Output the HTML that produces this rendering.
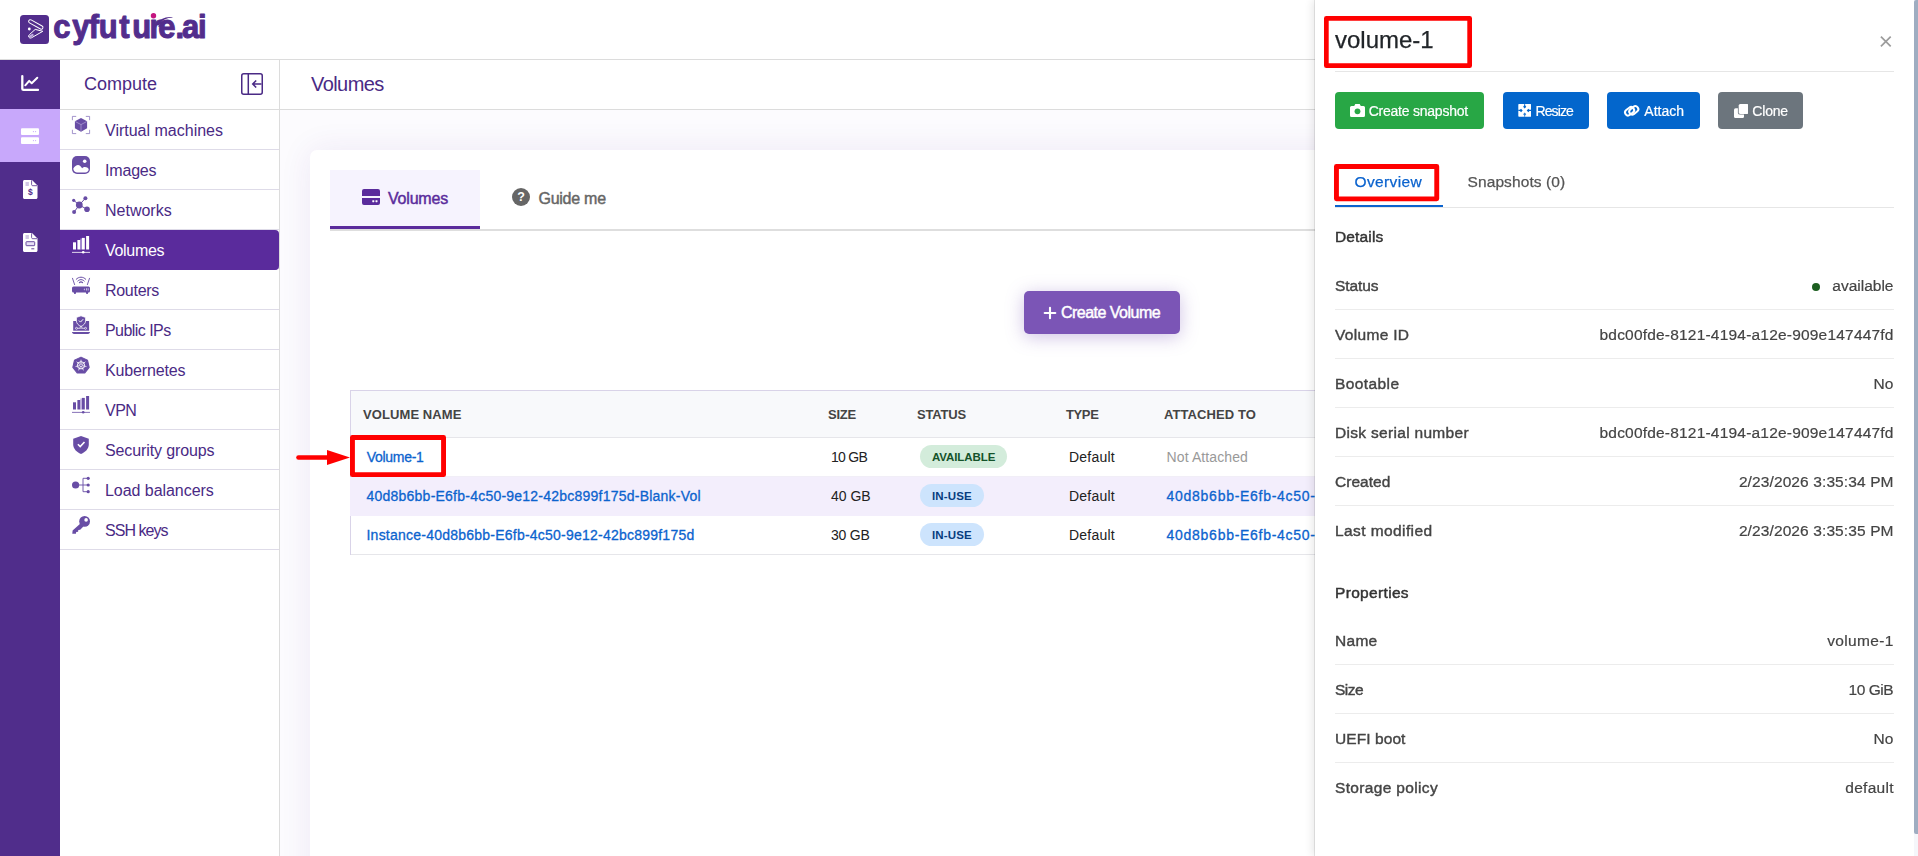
<!DOCTYPE html>
<html lang="en">
<head>
<meta charset="utf-8">
<title>Volumes</title>
<style>
*{box-sizing:border-box;margin:0;padding:0}
html,body{width:1918px;height:856px;overflow:hidden;background:#fff}
body{position:relative;font-family:"Liberation Sans",sans-serif;color:#4a2a85}
.abs{position:absolute}
/* top bar */
#top{position:absolute;left:0;top:0;width:1918px;height:60px;background:#fff;border-bottom:1px solid #dcdcdc}
#logo{position:absolute;left:50px;top:0;overflow:visible}
/* rail */
#rail{position:absolute;left:0;top:60px;width:60px;height:796px;background:#502d8b}
#rail .act{position:absolute;left:0;top:49px;width:60px;height:53px;background:#c8a8fb}
#rail .ri{position:absolute;overflow:visible}
/* sidebar */
#side{position:absolute;left:60px;top:60px;width:220px;height:796px;background:#fff;border-right:1px solid #dcdcdc}
#side .hd{height:50px;border-bottom:1px solid #dcdcdc;position:relative}
#side .hd span{position:absolute;left:24px;top:13px;font-size:18px;line-height:22px;color:#4a2a85}
#side .it{height:40px;border-bottom:1px solid #dedbe8;position:relative}
#side .it span{position:absolute;left:45px;top:11px;font-size:16px;line-height:20px;color:#4a2a85;white-space:nowrap}
#side .it svg{position:absolute;left:12px;top:6px;overflow:visible}
#side .it.on{background:#5a2b9c;border-radius:0 4px 4px 0;border-bottom-color:#5a2b9c}
#side .it.on span{color:#fff}
/* main */
#main{position:absolute;left:280px;top:60px;width:1638px;height:796px;background:#fcfbfe;overflow:hidden}
#main .hd{height:50px;background:#fff;border-bottom:1px solid #dcdcdc;position:relative}
#main .hd span{position:absolute;left:31px;top:12px;font-size:20px;line-height:24px;color:#4a2a85;letter-spacing:-.57px}
#card{position:absolute;left:30px;top:90px;width:1700px;height:800px;background:#fff;border-radius:7px;box-shadow:0 0 32px rgba(80,40,150,.085)}

/* tabs */
#tabs{position:absolute;left:20px;top:20px;width:1700px;height:61px;border-bottom:2px solid #dedede}
#tabs .t{position:absolute;top:0;height:59px;font-size:16px;line-height:20px;-webkit-text-stroke:.45px currentColor}
#tabs .t1{left:0;width:150px;background:#f6f3fe;border-bottom:3px solid #5a2b9c;color:#5a2b9c}
#tabs .t1 span{position:absolute;left:58px;top:19px;letter-spacing:-.2px}
#tabs .t1 svg{position:absolute;left:32px;top:19px}
#tabs .t2{left:150px;width:160px;color:#666}
#tabs .t2 span{position:absolute;left:58.500px;top:19px;letter-spacing:-.26px}
#tabs .t2 svg{position:absolute;left:32px;top:18px}
#cbtn{position:absolute;left:714px;top:141px;width:156px;height:43px;background:#7b55b6;border-radius:5px;box-shadow:0 3px 18px rgba(123,85,182,.36);color:#fff;font-size:16px;line-height:20px;-webkit-text-stroke:.45px #fff}
#cbtn span{position:absolute;left:37px;top:12px;white-space:nowrap;letter-spacing:-.52px}
#cbtn svg{position:absolute;left:19px;top:15px}
/* table */
#tbl{position:absolute;left:40px;top:240px;width:1660px;border:1px solid #d9d3e8;border-right:none;border-bottom:none}
#tbl .r{position:relative;height:38.750px;border-bottom:1px solid #e6e6ea;font-size:14px;line-height:18px;color:#222}
#tbl .r.h{height:47px;background:#f8f9fb;font-size:13px;font-weight:bold;color:#444;letter-spacing:.5px}
#tbl .r.hv{background:#f3eefc;border-bottom-color:#f3eefc;margin-left:-1px;padding-left:1px}
#tbl .r.hv span,#tbl .r.hv .bd{margin-left:1px}
#tbl .r.r1{border-bottom-color:#f1eef7}
#tbl .r.r3{height:39.500px}
#tbl .r span{position:absolute;top:10px;white-space:nowrap}
#tbl .r.h span{top:15px}
#tbl .c1{left:15.500px;color:#0b63ce;letter-spacing:.23px;-webkit-text-stroke:.3px #0b63ce}
#tbl .c2{left:480px}
#tbl .c3{left:569px}
#tbl .c4{left:718px;letter-spacing:.23px}
#tbl .c5{left:815.600px;letter-spacing:.23px}
#tbl .h .c1{left:12px;color:#444;-webkit-text-stroke:0}
#tbl .h .c2{left:477px}
#tbl .h .c3{left:566px}
#tbl .h .c4{left:715px}
#tbl .h .c5{left:813px}
#tbl a{color:#0b63ce;letter-spacing:.72px;-webkit-text-stroke:.3px #0b63ce}
#tbl .na{color:#999;letter-spacing:.1px}
#tbl .bd{position:absolute;left:569px;top:7px;height:23px;border-radius:12px;font-size:11.500px;font-weight:bold;line-height:24px;padding:0 12px;letter-spacing:.3px;white-space:nowrap}
#tbl .bd.g{background:#d3ecdb;color:#14532a;letter-spacing:-.1px;width:87px}
#tbl .bd.b{background:#cde4fd;color:#083d80;letter-spacing:.15px;width:64px}
#arrow{position:absolute;left:294px;top:448px}
.rb{position:absolute}
/* panel */
#panel{position:absolute;left:1315px;top:0;width:603px;height:856px;background:#fff;box-shadow:-1px 0 0 rgba(0,0,0,.09),-3px 0 8px rgba(0,0,0,.09);will-change:transform}

#panel{font-family:"Liberation Sans",sans-serif;color:#444}
#panel .ttl{position:absolute;left:20px;top:25px;font-size:24px;line-height:30px;color:#212529;white-space:nowrap;-webkit-text-stroke:.25px #212529}
#panel .hr{position:absolute;left:20px;top:71px;width:559px;height:1px;background:#e6e6e6}
#panel .btn{position:absolute;top:92px;height:37px;border-radius:4px;color:#fff;font-size:14px;line-height:18px}
#panel .btn span{position:absolute;top:10px;white-space:nowrap;-webkit-text-stroke:.2px #fff}
#panel .btn svg{position:absolute}
#b1{left:20px;width:149px;background:#28a745}
#b2{left:188px;width:86px;background:#0366cc}
#b3{left:292px;width:93px;background:#0366cc}
#b4{left:403px;width:85px;background:#6c757d}
#ptabs{position:absolute;left:20px;top:160px;width:559px;height:48px;border-bottom:1px solid #e6e6e6}
#ptabs .a{position:absolute;left:0;top:0;width:108px;height:47px;border-bottom:2px solid #0b63ce;color:#0b63ce;font-size:15.500px;line-height:20px;letter-spacing:.36px;-webkit-text-stroke:.25px #0b63ce}
#ptabs .a span{position:absolute;left:19.500px;top:12px}
#ptabs .b{position:absolute;left:132.500px;top:12px;font-size:15.500px;line-height:20px;color:#555;white-space:nowrap;letter-spacing:.1px;-webkit-text-stroke:.25px #555}
#panel h4{position:absolute;left:20px;font-size:15.500px;line-height:20px;font-weight:normal;color:#333;-webkit-text-stroke:.45px #333;white-space:nowrap}
#panel .row{position:absolute;left:20px;width:559px;height:49px;border-bottom:1px solid #ececec;font-size:15px;line-height:20px}
#panel .row.last{border-bottom:none}
#panel .row b{position:absolute;left:0;top:15px;font-weight:normal;font-size:15.500px;color:#444;-webkit-text-stroke:.4px #444;white-space:nowrap}
#panel .row i{position:absolute;right:.5px;top:15px;font-style:normal;color:#444;white-space:nowrap;font-size:15.500px;letter-spacing:.2px;margin-right:-.2px;-webkit-text-stroke:.2px #444}
#panel .dot{position:absolute;left:477px;top:22px;width:8px;height:8px;border-radius:50%;background:#1c5e20}
#sbar{position:absolute;left:1914px;top:0;width:4px;height:856px;background:#f5f6fa}
#sbar div{width:4px;height:834px;background:#9fadc1;border-radius:2px 0 0 2px}
#xbtn{position:absolute;left:565px;top:36px}
</style>
</head>
<body>
<div id="top">
<svg style="position:absolute;left:20px;top:15px" width="29" height="29" viewBox="0 0 29 29"><rect width="29" height="29" rx="3.500" fill="#522d8c"/><g fill="none" stroke-linecap="round" stroke-linejoin="round"><path d="M10.300 6.400L21.300 12.500" stroke="#fff" stroke-width="4.300"/><path d="M10.300 6.400L21.300 12.500" stroke="#522d8c" stroke-width="2.400"/><path d="M15.600 14.500L22.800 16.300L11.300 22.900A1.900 1.900 0 0 1 9.300 19.700z" stroke="#fff" stroke-width="1"/><path d="M10 21.500l2.600-1.500" stroke="#bfaadf" stroke-width="2.200"/></g><circle cx="9.300" cy="14" r="1.400" fill="#fff"/></svg>
<svg id="logo" width="170" height="50" viewBox="0 0 170 50"><text transform="scale(1,1.1)" x="3.20 22.15 38.80 48.70 69.30 82.20 99.40 108.30 125.40 131.90 148.00" y="34.64" font-family="Liberation Sans,sans-serif" font-weight="bold" font-size="31" fill="#522d8c" stroke="#522d8c" stroke-width="1" stroke-linejoin="round">cyfuture.ai</text></svg>
<svg style="position:absolute;left:148px;top:10px;overflow:visible" width="30" height="14" viewBox="0 0 30 14"><circle cx="5.500" cy="5.700" r="2.700" fill="#c4157f"/><path d="M7.800 14.500C11.500 9 18.500 6 25.200 7.400C19 7.300 13.500 10 10.800 15.500z" fill="#522d8c"/><path d="M10 16.500C13 11.800 17.500 9.800 22.300 10.300C18 10.700 14.300 13 12.300 17z" fill="#522d8c"/></svg>
</div>
<div id="rail"><div class="act"></div>
<svg class="ri" style="left:20px;top:14px" width="20" height="18" viewBox="0 0 20 18"><path d="M2.300 2.100v12.600c0 .7.500 1.200 1.200 1.200H18" stroke="#fff" stroke-width="2.300" fill="none" stroke-linecap="round"/><path d="M5.300 11.300L9.200 6.900l2.500 2.400 5.600-5.500" stroke="#fff" stroke-width="2" fill="none" stroke-linecap="round" stroke-linejoin="round"/></svg>
<svg class="ri" style="left:21px;top:68px" width="18" height="16" viewBox="0 0 18 16"><rect x="0" y=".3" width="18" height="6.600" rx="1" fill="#fff"/><rect x="0" y="9.300" width="18" height="6.600" rx="1" fill="#fff"/><g fill="#c8a8fb"><circle cx="12.400" cy="3.600" r=".6"/><circle cx="14.600" cy="3.600" r=".6"/><circle cx="12.400" cy="12.600" r=".6"/><circle cx="14.600" cy="12.600" r=".6"/></g></svg>
<svg class="ri" style="left:23px;top:120px" width="15" height="19" viewBox="0 0 15 19"><path d="M1.500 0H9l5.500 5.500v12c0 .8-.7 1.500-1.500 1.500H1.500C.7 19 0 18.300 0 17.500v-16C0 .7.700 0 1.500 0z" fill="#fff"/><path d="M8.600.3v4.300c0 .6.500 1.100 1.100 1.100h4.400" stroke="#502d8b" stroke-width=".8" fill="none"/><path d="M2.500 3h3.400M2.500 5h3.400" stroke="#8d74bd" stroke-width=".8"/><text x="7.300" y="15.200" font-family="Liberation Sans,sans-serif" font-weight="bold" font-size="8.500" fill="#502d8b" text-anchor="middle">$</text></svg>
<svg class="ri" style="left:23px;top:173px" width="15" height="19" viewBox="0 0 15 19"><path d="M1.500 0H9l5.500 5.500v12c0 .8-.7 1.500-1.500 1.500H1.500C.7 19 0 18.300 0 17.500v-16C0 .7.700 0 1.500 0z" fill="#fff"/><path d="M8.600.3v4.300c0 .6.500 1.100 1.100 1.100h4.400" stroke="#502d8b" stroke-width=".8" fill="none"/><path d="M2.500 3h3.400M2.500 5h3.400" stroke="#8d74bd" stroke-width=".8"/><rect x="3" y="8.700" width="8.700" height="4" rx=".6" fill="#e6def5" stroke="#5a3a96" stroke-width=".9"/><path d="M8.300 15.800h3" stroke="#502d8b" stroke-width=".9"/></svg>
</div>
<div id="side">
  <div class="hd"><span>Compute</span><svg style="position:absolute;left:181px;top:13px" width="22" height="22" viewBox="0 0 22 22"><rect x=".75" y=".75" width="20.500" height="20.500" rx="2" fill="none" stroke="#4a2a85" stroke-width="1.500"/><path d="M7.300 1v20M20.500 11h-8.500M15.200 7.400L11.700 11l3.500 3.600" fill="none" stroke="#4a2a85" stroke-width="1.500"/></svg></div>
  <div class="it"><svg width="18" height="18" viewBox="0 0 18 18"><path d="M.4 4.2V.4h3.8M13.8.4h3.8v3.8M17.6 13.8v3.8h-3.8M4.2 17.6H.4v-3.8" stroke="#8c78bf" stroke-width=".8" fill="none"/><path d="M9 2l6.1 3.3v7L9 15.8l-6.1-3.5v-7z" fill="#684da5"/><path d="M3.2 5.5L9 8.6l5.8-3.1M9 8.6v6.9" stroke="#b5a5d9" stroke-width=".7" fill="none"/></svg><span>Virtual machines</span></div>
  <div class="it"><svg width="18" height="18" viewBox="0 0 18 18"><rect x="0" y="0" width="18" height="18" rx="5" fill="#684da5"/><path d="M1.3 12.6C2.6 10.3 4.4 9.1 6 9.1c1.700 0 2.900 1.500 4.100 3.200 .8-.9 1.800-1.400 2.900-1.400 1.600 0 3 .9 3.700 2.100 0 2-1.500 3.500-3.500 3.500H4.800c-2 0-3.500-1.700-3.500-3.900z" fill="#fff"/><circle cx="12.7" cy="5.200" r="1.800" fill="#fff"/></svg><span style="letter-spacing:-0.18px">Images</span></div>
  <div class="it"><svg width="18" height="18" viewBox="0 0 18 18"><g stroke="#684da5" stroke-width="1" fill="none"><path d="M7.300 9L13.400 2.200M7.300 9L1.700 4.300M7.300 9L2.100 16M7.300 9L15 13.300"/></g><g fill="#684da5"><circle cx="7.300" cy="9" r="3.400"/><circle cx="13.400" cy="2.200" r="2"/><circle cx="1.700" cy="4.300" r="1.600"/><circle cx="2.100" cy="16" r="2"/><circle cx="15" cy="13.300" r="2.800"/></g></svg><span>Networks</span></div>
  <div class="it on"><svg width="18" height="18" viewBox="0 0 18 18"><g fill="#fff"><rect x="1" y="6.300" width="3" height="7.200"/><rect x="5.400" y="4" width="3" height="9.500"/><rect x="9.900" y="1.900" width="2.900" height="11.600"/><rect x="14.100" y="0" width="3" height="13.500"/><rect x="8.400" y="2.500" width="1.500" height="11" fill="#a88fd6"/><rect x="0" y="15.900" width="18" height=".8"/><circle cx="11.200" cy="16.300" r="1.300"/></g></svg><span style="letter-spacing:-.3px">Volumes</span></div>
  <div class="it"><svg width="18" height="18" viewBox="0 0 18 18"><g stroke="#684da5" fill="none" stroke-linecap="round"><path d="M.5 2.300L2.600 8.600M17.500 2.300L15.400 8.600" stroke-width=".9"/><path d="M4.200 3.300C6.800 .4 11.200 .4 13.800 3.300" stroke-width="1"/><path d="M5.800 5C7.600 3.100 10.400 3.100 12.200 5" stroke-width="1"/><path d="M7.400 6.600C8.300 5.700 9.700 5.700 10.600 6.600" stroke-width="1.100"/></g><path d="M1.500 10.400h15a1.500 1.500 0 0 1 1.500 1.500v3a1.500 1.500 0 0 1-1.500 1.500h-.3l-.5 1.500h-1.300l-.5-1.500H4.100l-.5 1.500H2.300l-.5-1.500h-.3A1.500 1.500 0 0 1 0 14.900v-3a1.500 1.500 0 0 1 1.500-1.500z" fill="#684da5"/><g fill="#cfc4e8"><path d="M11.600 13.400l1.300-1.100v2.200zM14 12.300h.9v2.200H14zM15.700 12.300h.9v2.200h-.9z"/></g></svg><span style="letter-spacing:-0.29px">Routers</span></div>
  <div class="it"><svg width="18" height="18" viewBox="0 0 18 18"><rect x="1.200" y="5" width="15.900" height="9.700" fill="#684da5"/><path d="M0 16.100h18c0 1.100-.9 1.900-2 1.900H2c-1.100 0-2-.8-2-1.900z" fill="#684da5"/><path d="M9 -.2l4.600 1.600v3.400c0 2.600-2 4.500-4.600 5.700-2.600-1.200-4.600-3.100-4.600-5.700V1.400z" fill="#684da5" stroke="#fff" stroke-width=".8"/><path d="M7 4.600l1.500 1.500 2.700-2.900" stroke="#fff" stroke-width="1" fill="none"/><g stroke="#fff" stroke-width=".7" fill="none"><circle cx="4.500" cy="12.300" r="1"/><circle cx="13.500" cy="12.300" r="1"/><circle cx="9" cy="11.500" r=".9"/><path d="M5.500 12.300h2.600M9.900 12.300h2.600M9 9.900v.7"/></g></svg><span style="letter-spacing:-0.55px">Public IPs</span></div>
  <div class="it"><svg width="18" height="18" viewBox="0 0 18 18"><path d="M9.00 0.20 L16.27 3.70 L18.07 11.57 L13.04 17.88 L4.96 17.88 L-0.07 11.57 L1.73 3.70z" fill="#684da5" stroke="#684da5" stroke-width="1.200" stroke-linejoin="round" transform="translate(9 9.500) scale(.9) translate(-9 -9.500)"/><g stroke="#fff" fill="none"><circle cx="9" cy="9.300" r="3.600" stroke-width="1"/><path d="M9 9.300L9.00 3.70M9 9.300L13.38 5.81M9 9.300L14.46 10.55M9 9.300L11.43 14.35M9 9.300L6.57 14.35M9 9.300L3.54 10.55M9 9.300L4.62 5.81" stroke-width=".8"/></g><circle cx="9" cy="9.300" r="1.300" fill="#684da5" stroke="#fff" stroke-width=".6"/></svg><span style="letter-spacing:-0.14px">Kubernetes</span></div>
  <div class="it"><svg width="18" height="18" viewBox="0 0 18 18"><g fill="#684da5"><rect x="1" y="6.300" width="3" height="7.200"/><rect x="5.400" y="4" width="3" height="9.500"/><rect x="9.900" y="1.900" width="2.900" height="11.600"/><rect x="14.100" y="0" width="3" height="13.500"/><rect x="8.400" y="2.500" width="1.500" height="11" fill="#b8a8db"/><rect x="0" y="15.900" width="18" height=".8"/><circle cx="11.200" cy="16.300" r="1.300"/></g></svg><span style="letter-spacing:-0.5px">VPN</span></div>
  <div class="it"><svg width="18" height="18" viewBox="0 0 18 18"><path d="M9 0l7.800 2.700v5.500c0 4.600-3.400 7.900-7.800 9.800-4.400-1.900-7.800-5.200-7.800-9.800V2.700z" fill="#684da5"/><path d="M5.900 8.300l2.300 2.300 4.300-4.600" stroke="#fff" stroke-width="1.600" fill="none"/></svg><span style="letter-spacing:-0.12px">Security groups</span></div>
  <div class="it"><svg width="18" height="18" viewBox="0 0 18 18"><circle cx="3.600" cy="9" r="3.600" fill="#684da5"/><path d="M7 9h9M16 2.300h-5v13.400h5" stroke="#684da5" stroke-width=".9" fill="none"/><g fill="#684da5"><circle cx="16.200" cy="2.300" r="1.600"/><circle cx="16.200" cy="9" r="1.600"/><circle cx="16.200" cy="15.700" r="1.600"/></g></svg><span style="letter-spacing:-0.05px">Load balancers</span></div>
  <div class="it"><svg width="18" height="18" viewBox="0 0 18 18"><path d="M9.300 6.700L.6 14.600 .3 17.700h3.600l.3-1.700 1.900-.2.200-1.800 1.900-.2 3.200-3.200z" fill="#684da5"/><circle cx="12.600" cy="5.400" r="5.400" fill="#684da5"/><circle cx="14.100" cy="3.900" r="1.800" fill="#fff"/></svg><span style="letter-spacing:-0.97px">SSH keys</span></div>
</div>
<div id="main">
  <div class="hd"><span>Volumes</span></div>
  <div id="card">
    <div id="tabs">
      <div class="t t1"><svg width="18" height="16" viewBox="0 0 18 16"><path d="M2 0h14a2 2 0 0 1 2 2v5H0V2a2 2 0 0 1 2-2zM0 9h18v5a2 2 0 0 1-2 2H2a2 2 0 0 1-2-2z" fill="#5a2b9c"/><rect x="10.300" y="11.200" width="2" height="2" rx=".4" fill="#fff"/><rect x="13.500" y="11.200" width="2" height="2" rx=".4" fill="#fff"/></svg><span>Volumes</span></div>
      <div class="t t2"><svg width="18" height="18" viewBox="0 0 18 18"><circle cx="9" cy="9" r="9" fill="#666"/><text x="9" y="13.300" text-anchor="middle" font-family="Liberation Sans,sans-serif" font-weight="bold" font-size="12.500" fill="#fff">?</text></svg><span>Guide me</span></div>
    </div>
    <div id="cbtn"><svg width="14" height="14" viewBox="0 0 14 14"><path d="M7 1.700v10.600M1.700 7h10.600" stroke="#fff" stroke-width="2.100" stroke-linecap="round"/></svg><span>Create Volume</span></div>
    <div id="tbl">
      <div class="r h"><span class="c1" style="letter-spacing:.09px">VOLUME NAME</span><span class="c2" style="letter-spacing:-.22px">SIZE</span><span class="c3" style="letter-spacing:-.18px">STATUS</span><span class="c4" style="letter-spacing:-.37px">TYPE</span><span class="c5" style="letter-spacing:.09px">ATTACHED TO</span></div>
      <div class="r r1"><span class="c1" style="letter-spacing:-.29px;left:15.700px">Volume-1</span><span class="c2" style="letter-spacing:-.74px">10 GB</span><div class="bd g">AVAILABLE</div><span class="c4">Default</span><span class="c5 na">Not Attached</span></div>
      <div class="r hv"><span class="c1">40d8b6bb-E6fb-4c50-9e12-42bc899f175d-Blank-Vol</span><span class="c2">40 GB</span><div class="bd b">IN-USE</div><span class="c4">Default</span><span class="c5 c1x"><a>40d8b6bb-E6fb-4c50-9e12-42bc899f175d</a></span></div>
      <div class="r r3"><span class="c1">Instance-40d8b6bb-E6fb-4c50-9e12-42bc899f175d</span><span class="c2" style="letter-spacing:-.2px">30 GB</span><div class="bd b">IN-USE</div><span class="c4">Default</span><span class="c5 c1x"><a>40d8b6bb-E6fb-4c50-9e12-42bc899f175d</a></span></div>
    </div>
  </div>
</div>
<svg id="arrow" width="60" height="20" viewBox="0 0 60 20"><path d="M4.5 9.5H36" stroke="#f00" stroke-width="4.6" stroke-linecap="round" fill="none"/><path d="M33 2L56 9.5L33 17z" fill="#f00"/></svg>
<svg class="rb" style="left:348px;top:433px" width="100" height="46"><rect x="4.450" y="4.450" width="91.100" height="37.200" rx="0" stroke-linejoin="round" fill="none" stroke="#f00" stroke-width="4.900"/></svg>
<div id="panel">
  <div class="ttl">volume-1</div>
  <svg id="xbtn" width="12" height="12" viewBox="0 0 12 12"><path d="M.9.6L10.700 10.400M10.700.6L.9 10.400" stroke="#9c9c9c" stroke-width="1.700" fill="none"/></svg>
  <div class="hr"></div>
  <div class="btn" id="b1"><svg style="left:15px;top:12px" width="15" height="13" viewBox="0 0 15 13"><path d="M5.300 0h4.400l1.100 2H13.500A1.500 1.500 0 0 1 15 3.500v8A1.500 1.500 0 0 1 13.500 13h-12A1.500 1.500 0 0 1 0 11.500v-8A1.500 1.500 0 0 1 1.500 2H4.200z" fill="#fff"/><circle cx="7.500" cy="7.300" r="2.900" fill="#28a745"/><circle cx="7.500" cy="7.300" r="1.200" fill="#fff" opacity="0"/></svg><span style="left:33.700px;letter-spacing:-.23px">Create snapshot</span></div>
  <div class="btn" id="b2"><svg style="left:15px;top:12.300px" width="13.400" height="12.800" viewBox="0 0 14 14"><rect width="14" height="14" rx=".8" fill="#fff"/><g fill="#0366cc"><path d="M6.600 0h.8l.2 1.600 1.100 1.300L7 4.800 5.300 2.900l1.100-1.300z"/><path d="M6.600 14h.8l.2-1.600 1.100-1.300L7 9.200l-1.700 1.900 1.100 1.300z" opacity=".85"/><path d="M0 6.400v1.200l1.800.1 1.200 1.200L4.800 7 3 5.100 1.800 6.300z"/><path d="M14 6.400v1.200l-1.800.1-1.200 1.200L9.200 7 11 5.100l1.200 1.200z"/></g></svg><span style="left:32.400px;letter-spacing:-.87px">Resize</span></div>
  <div class="btn" id="b3"><svg style="left:16px;top:11.900px;overflow:visible" width="17" height="13.500" viewBox="0 0 17 13.500"><g fill="none" stroke="#fff" stroke-width="2" stroke-linecap="round"><rect x="-3.400" y="-3" width="9.800" height="6" rx="3" transform="translate(5.400 8.200) rotate(-38)"/><rect x="-3.400" y="-3" width="9.800" height="6" rx="3" transform="translate(9.600 7.300) rotate(-38)"/></g></svg><span style="left:37.300px">Attach</span></div>
  <div class="btn" id="b4"><svg style="left:15.600px;top:11.900px" width="14.800" height="14.100" viewBox="0 0 14.800 14.100"><rect x="0" y="4.200" width="10" height="9.900" rx="1.600" fill="#fff"/><rect x="3.900" y="-.6" width="11.500" height="11.200" rx="2.200" fill="#6c757d"/><rect x="4.700" y="0" width="10.100" height="9.900" rx="1.600" fill="#fff"/></svg><span style="left:34.300px;letter-spacing:-.18px">Clone</span></div>
  <div id="ptabs"><div class="a"><span>Overview</span></div><div class="b">Snapshots (0)</div></div>
  <h4 style="top:227px;letter-spacing:0.14px">Details</h4>
  <div class="row" style="top:261px"><b style="letter-spacing:-0.09px">Status</b><div class="dot"></div><i style="letter-spacing:0px;margin-right:0px">available</i></div>
  <div class="row" style="top:310px"><b style="letter-spacing:0.32px">Volume ID</b><i>bdc00fde-8121-4194-a12e-909e147447fd</i></div>
  <div class="row" style="top:359px"><b style="letter-spacing:0.41px">Bootable</b><i>No</i></div>
  <div class="row" style="top:408px"><b style="letter-spacing:0.31px">Disk serial number</b><i>bdc00fde-8121-4194-a12e-909e147447fd</i></div>
  <div class="row" style="top:457px"><b style="letter-spacing:0.03px">Created</b><i style="letter-spacing:0.11px;margin-right:-0.11px">2/23/2026 3:35:34 PM</i></div>
  <div class="row last" style="top:506px"><b style="letter-spacing:0.41px">Last modified</b><i style="letter-spacing:0.11px;margin-right:-0.11px">2/23/2026 3:35:35 PM</i></div>
  <h4 style="top:583px;letter-spacing:0.33px">Properties</h4>
  <div class="row" style="top:616px"><b style="letter-spacing:0.29px">Name</b><i style="letter-spacing:0.36px;margin-right:-0.36px">volume-1</i></div>
  <div class="row" style="top:665px"><b style="letter-spacing:-0.54px">Size</b><i style="letter-spacing:-0.5px;margin-right:0.5px">10 GiB</i></div>
  <div class="row" style="top:714px"><b style="letter-spacing:0.08px">UEFI boot</b><i>No</i></div>
  <div class="row last" style="top:763px"><b style="letter-spacing:0.34px">Storage policy</b><i style="letter-spacing:0.28px;margin-right:-0.28px">default</i></div>
</div>
<svg class="rb" style="left:1322px;top:14px" width="152" height="56"><rect x="4.350" y="4.350" width="143.300" height="47.300" rx="0" stroke-linejoin="round" fill="none" stroke="#f00" stroke-width="4.700"/></svg>
<svg class="rb" style="left:1332px;top:162px" width="110" height="42"><rect x="4.450" y="4.450" width="100.300" height="32.400" rx="0" stroke-linejoin="round" fill="none" stroke="#f00" stroke-width="4.900"/></svg>
<div id="sbar"><div></div></div>
</body>
</html>
